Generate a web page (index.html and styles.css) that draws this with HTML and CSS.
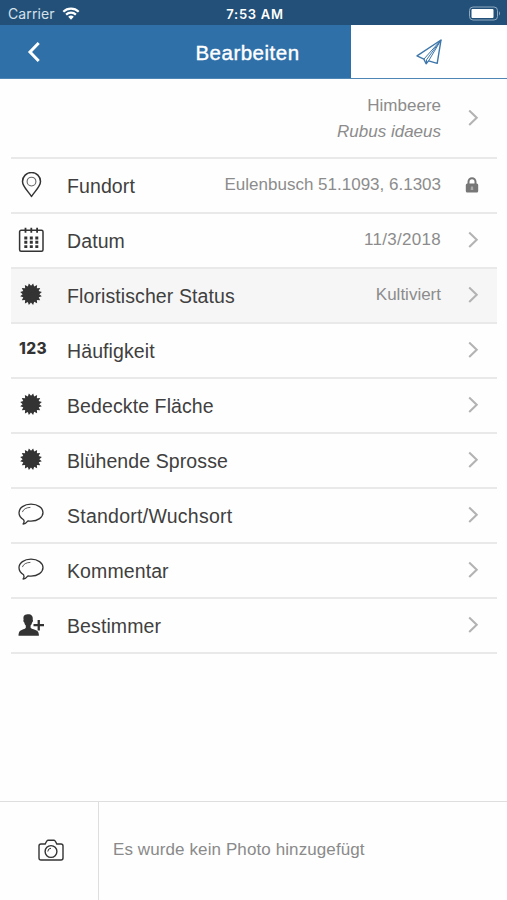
FILE: index.html
```html
<!DOCTYPE html>
<html lang="de">
<head>
<meta charset="utf-8">
<title>Bearbeiten</title>
<link rel="stylesheet" href="styles.css">
</head>
<body>
<svg class="defs" width="0" height="0">
  <defs>
    <symbol id="chevron" viewBox="0 0 12 18"><path d="M2.200 1.500l7.500 7.200-7.500 7.200" fill="none" stroke="#b3b3b3" stroke-width="2.100"/></symbol>
    <symbol id="burst" viewBox="-13 -13 26 26"><path transform="translate(0 -.8) rotate(11.25)" fill="#333" d="M0-11L1.600-8.200 4.200-10.200 4.600-6.900 7.800-7.800 6.900-4.600 10.200-4.200 8.200-1.600 11 0 8.200 1.600 10.200 4.200 6.900 4.600 7.800 7.800 4.600 6.900 4.200 10.200 1.600 8.200 0 11-1.600 8.200-4.200 10.200-4.600 6.900-7.800 7.800-6.900 4.600-10.200 4.200-8.200 1.600-11 0-8.200-1.600-10.200-4.200-6.900-4.600-7.800-7.800-4.600-6.900-4.200-10.200-1.600-8.200z"/></symbol>
    <symbol id="bubble" viewBox="0 0 26 26"><g fill="none" stroke="#333" stroke-linejoin="round" stroke-linecap="round"><path stroke-width="1.300" d="M5.600 17.800C2.800 16.100 1 13.700 1 10.800 1 5.800 6.200 2.200 13 2.200s12 3.600 12 8.400-5.200 8.500-12 8.500c-1 0-2-.1-3-.3-1.200 1.600-2.800 2.900-4.900 3.200C6.300 20.500 6.400 19.100 5.600 17.800z"/><path stroke-width=".8" d="M4.500 9.700C5.200 7.100 8.500 5.500 12 5.400"/></g></symbol>
  </defs>
</svg>
<header class="top">
  <div class="status">
    <div class="carrier">Carrier
      <svg width="18" height="14" viewBox="0 0 18 14"><g fill="none" stroke="#fff" stroke-width="2.200"><path d="M1.300 4.700a11 11 0 0 1 15.400 0M4.100 7.600a7 7 0 0 1 9.800 0"/></g><path d="M9 12.700L6.200 9.800a4 4 0 0 1 5.600 0z" fill="#fff"/></svg>
    </div>
    <div class="time">7:53 AM</div>
    <svg class="battery" width="34" height="16" viewBox="0 0 34 16"><rect x="1.500" y="1" width="28" height="13" rx="3.500" fill="none" stroke="#8fa9c0"/><rect x="3.500" y="3" width="22" height="9" rx="1" fill="#fff"/><path d="M31 5.300q2 2.200 0 4.400z" fill="#8fa9c0"/></svg>
  </div>
  <nav class="nav">
    <div class="back"><svg width="14" height="22" viewBox="0 0 14 22"><path d="M11.700 2L3 11l8.700 9" fill="none" stroke="#fff" stroke-width="3"/></svg></div>
    <h1>Bearbeiten</h1>
    <div class="send"><svg width="26" height="26" viewBox="0 0 26 26"><g fill="none" stroke="#3d76aa" stroke-linejoin="round"><path stroke-width="1.400" d="M25 1L1 16.800l6.900 3.300 2.200 4.700 2.500-2.900 8.600 2.400z"/><path stroke-width="1" d="M25 1L7.900 20.100M25 1L10.500 20.800v3.500M25 1L12.600 21.900"/></g></svg></div>
  </nav>
</header>
<main class="list">
  <div class="row species">
    <span class="value">Himbeere<br><i>Rubus idaeus</i></span>
    <svg class="go"><use href="#chevron"/></svg>
  </div>
  <div class="row">
    <svg class="icon" viewBox="0 0 26 26"><g fill="none" stroke="#333"><path stroke-width="1.500" stroke-linejoin="round" d="M13.500 24.500C11.500 20.700 4.500 14.900 4.500 9.500a9 9 0 0 1 18 0C22.500 14.900 15.500 20.700 13.500 24.500z"/><circle cx="13.500" cy="9.600" r="4.400" stroke="#666" stroke-width="1.100"/></g></svg>
    <span class="label">Fundort</span><span class="value">Eulenbusch 51.1093, 6.1303</span>
    <svg class="lock" viewBox="0 0 14 16"><path d="M3.500 7V4.800a3.500 3.500 0 0 1 7 0V7" fill="none" stroke="#777" stroke-width="2"/><rect x=".8" y="6.500" width="12.400" height="9" rx="1.500" fill="#777"/><path d="M6 9.500h2l.4 3.500H5.600z" fill="#aaa"/></svg>
  </div>
  <div class="row">
    <svg class="icon" viewBox="0 0 26 26"><g fill="none" stroke="#333"><rect x="1.600" y="3.300" width="23.400" height="21" rx="1.500" stroke-width="1.500"/><path d="M7.500.8v5M13.300.8v5M19.100.8v5" stroke-width="1.800"/><path d="M6.300 11h14M6.300 15.300h14M6.300 19.600h14" stroke-width="2.900" stroke-dasharray="3 2.500"/></g></svg>
    <span class="label">Datum</span><span class="value date">11/3/2018</span><svg class="go"><use href="#chevron"/></svg>
  </div>
  <div class="row active"><svg class="icon"><use href="#burst"/></svg><span class="label">Floristischer Status</span><span class="value">Kultiviert</span><svg class="go"><use href="#chevron"/></svg></div>
  <div class="row"><span class="icon digits">123</span><span class="label">Häufigkeit</span><svg class="go"><use href="#chevron"/></svg></div>
  <div class="row"><svg class="icon"><use href="#burst"/></svg><span class="label">Bedeckte Fläche</span><svg class="go"><use href="#chevron"/></svg></div>
  <div class="row"><svg class="icon"><use href="#burst"/></svg><span class="label">Blühende Sprosse</span><svg class="go"><use href="#chevron"/></svg></div>
  <div class="row"><svg class="icon"><use href="#bubble"/></svg><span class="label wide">Standort/Wuchsort</span><svg class="go"><use href="#chevron"/></svg></div>
  <div class="row"><svg class="icon"><use href="#bubble"/></svg><span class="label">Kommentar</span><svg class="go"><use href="#chevron"/></svg></div>
  <div class="row">
    <svg class="icon" viewBox="0 0 26 26"><g fill="#333"><path d="M9.500 2.200c3.700-.3 5.800 1.800 5.200 5.200.7 1.200.1 2.400-.6 3.100-.3 1.600-1 2.500-1.500 3.100v2.200c2 1.900 6.800 2 7.800 4.700.5 1.100.5 2.200.5 3.300H.5c0-1.100 0-2.200.5-3.300 1-2.700 5.300-2.800 6.800-4.700v-2.200c-.6-.6-1.300-1.600-1.500-3.100-.9-.7-1.200-1.900-.7-3.100-.5-2.900.3-5 3.900-5.200z"/><path d="M19.600 8h2.300v4H26v2.300h-4.100v4.200h-2.300v-4.200h-4.100V12h4.100z"/></g></svg>
    <span class="label">Bestimmer</span><svg class="go"><use href="#chevron"/></svg>
  </div>
</main>
<footer class="photo">
  <div class="camera"><svg width="26" height="24" viewBox="0 0 26 24"><g fill="none" stroke="#333" stroke-linejoin="round"><path stroke-width="1.400" d="M3 6h4.200c1-1.500 1.400-3.800 2.600-3.800h6.400c1.200 0 1.600 2.300 2.600 3.800H23q2 0 2 2v12q0 2-2 2H3q-2 0-2-2V8q0-2 2-2z"/><circle cx="13" cy="13.500" r="5.900" stroke-width="1.400"/><path stroke-width="1" d="M9.800 13.500a3.500 3.500 0 0 1 3.200-3.300"/></g></svg></div>
  <p>Es wurde kein Photo hinzugefügt</p>
</footer>
</body>
</html>
```
FILE: styles.css
```css
* { box-sizing: border-box; }
body {
  margin: 0;
  height: 900px;
  display: flex;
  flex-direction: column;
  background: #fefefe;
  color: #404040;
  font-family: "Liberation Sans", Arial, sans-serif;
  overflow: hidden;
}
.defs { position: absolute; }
.status {
  height: 25px;
  display: grid;
  grid-template-columns: 1fr auto 1fr;
  align-items: center;
  padding: 2px 5px 0 8px;
  background: #225078;
  color: #fff;
  font: 14px Inter, sans-serif;
}
.carrier { display: flex; align-items: center; gap: 7px; color: #d5e0eb; letter-spacing: .1px; }
.time { font-weight: 600; font-size: 13px; letter-spacing: .7px; }
.battery { justify-self: end; }
.nav {
  height: 54px;
  display: grid;
  grid-template-columns: 144px 207px 156px;
  background: #2f70a8;
  border-bottom: 1px solid #4e86b6;
}
.back { display: flex; align-items: center; padding-left: 27px; }
h1 {
  margin: 0;
  padding-top: 2px;
  align-self: center;
  text-align: center;
  color: #fff;
  font-weight: 400;
  font-size: 20.5px;
  letter-spacing: .5px;
  -webkit-text-stroke: .4px #fff;
}
.send { display: flex; align-items: center; justify-content: center; background: #fff; }
.list { flex: 1; padding: 0 10px 0 11px; }
.row {
  height: 55px;
  display: flex;
  align-items: center;
  padding: 0 18px 2px 7px;
  border-bottom: 2px solid #e9e9e9;
}
.species { height: 80px; padding-bottom: 0; }
.species .value { padding-top: 2px; }
.active { background: #f6f6f6; }
.icon { flex: none; width: 26px; height: 26px; }
.digits { padding-left: 1px; font: 800 15.500px/24px Inter, sans-serif; color: #333; letter-spacing: .4px; white-space: nowrap; }
.label { margin-left: 23px; padding-top: 4px; font-size: 19.500px; letter-spacing: .1px; white-space: nowrap; }
.wide { letter-spacing: .25px; }
.value { margin-left: auto; font-size: 17px; line-height: 26px; text-align: right; color: #8c8c8c; white-space: nowrap; }
.date { letter-spacing: .3px; }
.go { flex: none; width: 12px; height: 18px; margin-left: auto; }
.value + .go { margin-left: 26px; }
.lock { flex: none; width: 14px; height: 16px; margin: 0 0 0 24px; }
.photo { height: 99px; display: flex; border-top: 1px solid #dedede; }
.camera { width: 99px; display: flex; align-items: center; justify-content: center; padding: 0 0 2px 4px; border-right: 1px solid #dedede; }
.photo p { margin: 0; padding: 0 0 2px 14px; align-self: center; font-size: 17px; letter-spacing: .1px; color: #8a8a8a; }
```
